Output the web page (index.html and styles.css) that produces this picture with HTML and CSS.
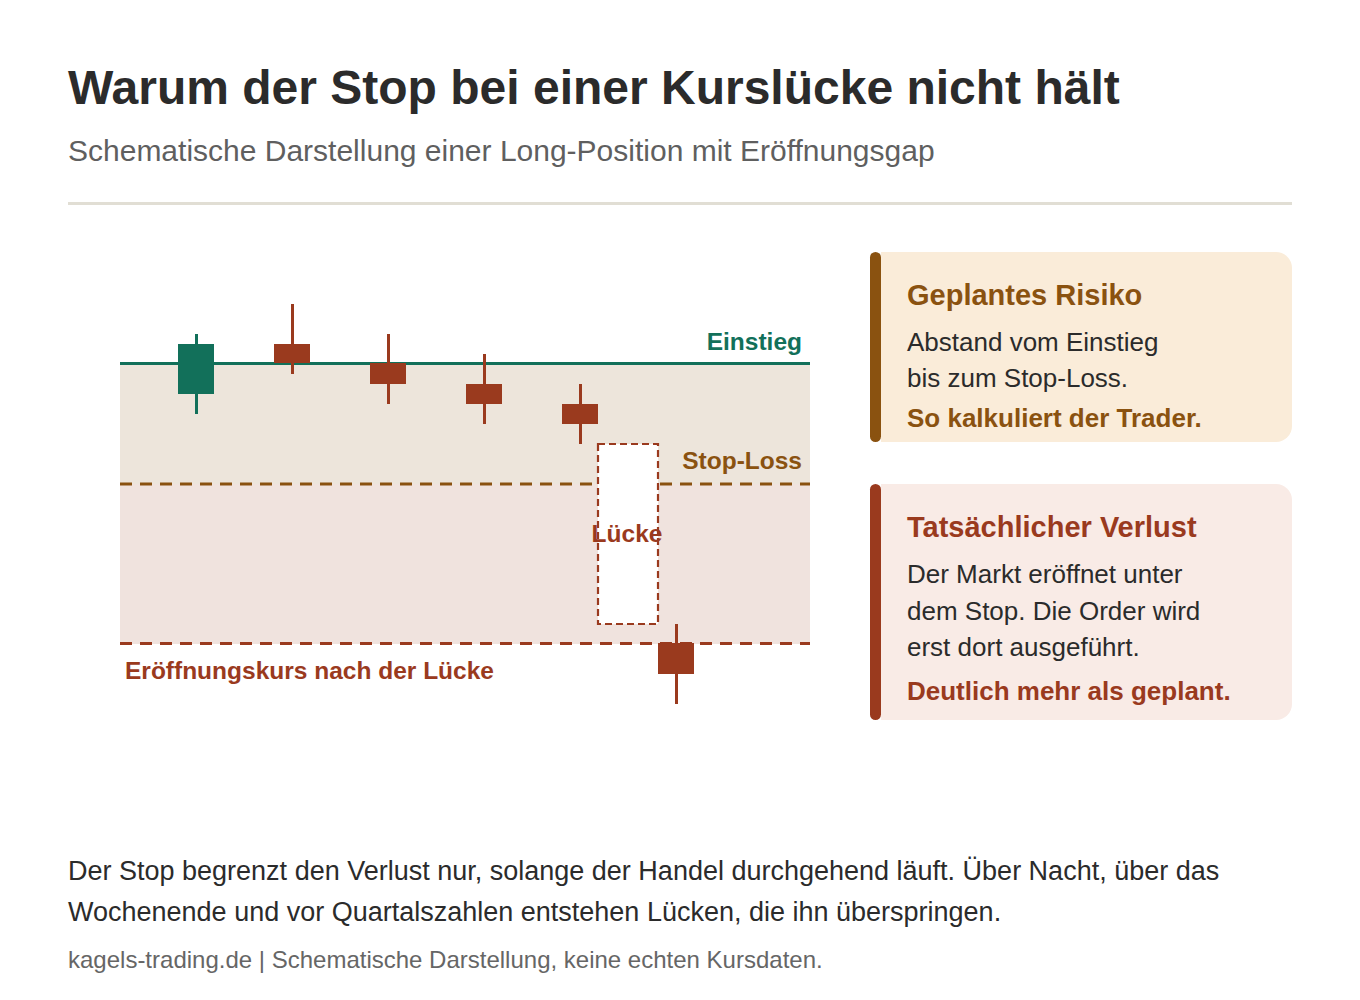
FILE: index.html
```html
<!DOCTYPE html>
<html lang="de">
<head>
<meta charset="utf-8">
<title>Warum der Stop bei einer Kurslücke nicht hält</title>
<link rel="stylesheet" href="styles.css">
</head>
<body>
<main class="page">
  <header class="header">
    <h1 class="title">Warum der Stop bei einer Kurslücke nicht hält</h1>
    <p class="subtitle">Schematische Darstellung einer Long-Position mit Eröffnungsgap</p>
  </header>
  <hr class="divider">
  <section class="content">
    <svg class="chart" width="772" height="467" viewBox="68 252 772 467" xmlns="http://www.w3.org/2000/svg">
      <rect x="120" y="363" width="690" height="121" fill="#ede5db"/>
      <rect x="120" y="484" width="690" height="160" fill="#f0e3de"/>
      <line x1="120" y1="363.5" x2="810" y2="363.5" stroke="#12705a" stroke-width="3"/>
      <line x1="120" y1="484" x2="810" y2="484" stroke="#8a5210" stroke-width="3" stroke-dasharray="12 8"/>
      <line x1="120" y1="643.5" x2="810" y2="643.5" stroke="#9a3a1e" stroke-width="3" stroke-dasharray="12 8"/>
      <rect x="598" y="444" width="60" height="180" fill="#ffffff" stroke="#9a3a1e" stroke-width="2.2" stroke-dasharray="7 4"/>
      <g stroke-width="3">
        <line x1="196.5" y1="334" x2="196.5" y2="414" stroke="#12705a"/>
        <rect x="178" y="344" width="36" height="50" fill="#12705a" stroke="none"/>
        <line x1="292.5" y1="304" x2="292.5" y2="374" stroke="#9a3a1e"/>
        <rect x="274" y="344" width="36" height="19" fill="#9a3a1e" stroke="none"/>
        <line x1="388.5" y1="334" x2="388.5" y2="404" stroke="#9a3a1e"/>
        <rect x="370" y="363" width="36" height="21" fill="#9a3a1e" stroke="none"/>
        <line x1="484.5" y1="354" x2="484.5" y2="424" stroke="#9a3a1e"/>
        <rect x="466" y="384" width="36" height="20" fill="#9a3a1e" stroke="none"/>
        <line x1="580.5" y1="384" x2="580.5" y2="444" stroke="#9a3a1e"/>
        <rect x="562" y="404" width="36" height="20" fill="#9a3a1e" stroke="none"/>
        <line x1="676.5" y1="624" x2="676.5" y2="704" stroke="#9a3a1e"/>
        <rect x="658" y="643" width="36" height="31" fill="#9a3a1e" stroke="none"/>
      </g>
      <text class="chart-label label-entry" x="802" y="350" text-anchor="end">Einstieg</text>
      <text class="chart-label label-stop" x="802" y="469" text-anchor="end">Stop-Loss</text>
      <text class="chart-label label-gap" x="627" y="542" text-anchor="middle">Lücke</text>
      <text class="chart-label label-gap" x="125" y="679">Eröffnungskurs nach der Lücke</text>
    </svg>
    <div class="cards">
      <article class="card card--risk">
        <div class="card-bar"></div>
        <div class="card-body">
          <h2 class="card-title">Geplantes Risiko</h2>
          <p class="card-text">Abstand vom Einstieg<br>bis zum Stop-Loss.</p>
          <p class="card-note">So kalkuliert der Trader.</p>
        </div>
      </article>
      <article class="card card--loss">
        <div class="card-bar"></div>
        <div class="card-body">
          <h2 class="card-title">Tatsächlicher Verlust</h2>
          <p class="card-text">Der Markt eröffnet unter<br>dem Stop. Die Order wird<br>erst dort ausgeführt.</p>
          <p class="card-note">Deutlich mehr als geplant.</p>
        </div>
      </article>
    </div>
  </section>
  <p class="explain">Der Stop begrenzt den Verlust nur, solange der Handel durchgehend läuft. Über Nacht, über das Wochenende und vor Quartalszahlen entstehen Lücken, die ihn überspringen.</p>
  <p class="source">kagels-trading.de | Schematische Darstellung, keine echten Kursdaten.</p>
</main>
</body>
</html>
```

FILE: styles.css
```css
html, body {
  margin: 0;
  padding: 0;
  background: #ffffff;
}

body {
  font-family: "Liberation Sans", Arial, Helvetica, sans-serif;
  color: #2b2b2b;
}

.page {
  width: 1224px;
  padding: 59px 68px 0 68px;
}

.header {
  margin: 0;
}

.title {
  margin: 0;
  font-size: 48px;
  line-height: 58px;
  font-weight: 700;
  color: #2b2b2b;
}

.subtitle {
  margin: 16px 0 0 0;
  font-size: 30px;
  line-height: 36px;
  color: #5f5f5f;
}

.divider {
  margin: 33px 0 0 0;
  border: 0;
  height: 3px;
  background: #e1ded4;
}

.content {
  display: flex;
  gap: 30px;
  margin-top: 47px;
  align-items: flex-start;
}

.chart {
  display: block;
  flex: 0 0 772px;
}

.chart-label {
  font-family: "Liberation Sans", Arial, Helvetica, sans-serif;
  font-weight: 700;
  font-size: 24.5px;
}

.label-entry { fill: #12705a; }
.label-stop { fill: #8a5210; }
.label-gap { fill: #9a3a1e; }

.cards {
  flex: 0 0 422px;
  display: flex;
  flex-direction: column;
  gap: 42px;
}

.card {
  display: flex;
}

.card-bar {
  flex: 0 0 11px;
  border-radius: 6px;
}

.card-body {
  flex: 1;
  border-radius: 0 16px 16px 0;
  padding: 25px 20px 6px 26px;
}

.card-title {
  margin: 0 0 11px 0;
  font-size: 29px;
  line-height: 36px;
  font-weight: 700;
}

.card-text {
  margin: 0;
  font-size: 26px;
  line-height: 36.4px;
  color: #2b2b2b;
}

.card-note {
  margin: 3px 0 0 0;
  font-size: 26px;
  line-height: 36.4px;
  font-weight: 700;
}

.card--risk .card-bar { background: #8a5210; }
.card--risk .card-body { background: #faecd9; }
.card--risk .card-title,
.card--risk .card-note { color: #8a5210; }

.card--loss .card-bar { background: #9a3a1e; }
.card--loss .card-body { background: #f9ebe6; padding-bottom: 10px; }
.card--loss .card-title,
.card--loss .card-note { color: #9a3a1e; }
.card--loss .card-note { margin-top: 8px; }

.explain {
  margin: 131px 0 0 0;
  font-size: 27px;
  line-height: 41px;
  color: #2b2b2b;
}

.source {
  margin: 12px 0 0 0;
  font-size: 24px;
  line-height: 30px;
  color: #666666;
}
```
